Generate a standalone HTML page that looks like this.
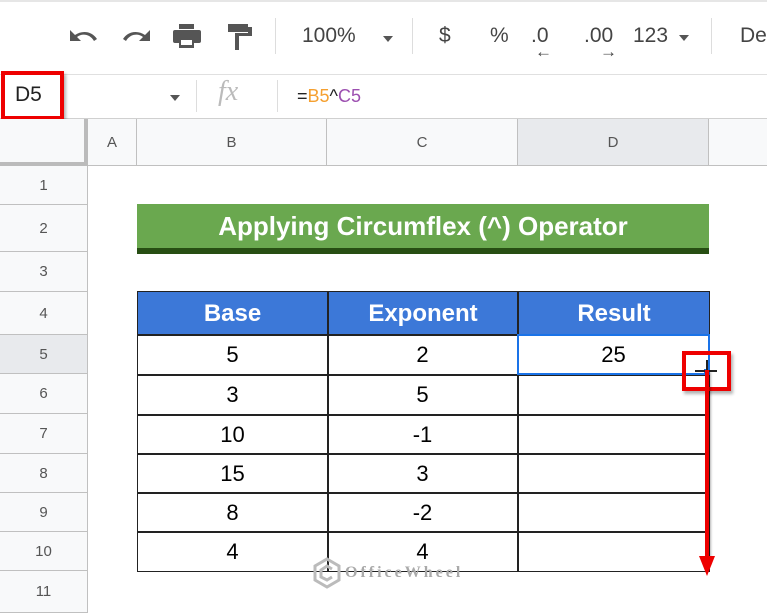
<!DOCTYPE html>
<html><head><meta charset="utf-8"><style>
*{margin:0;padding:0;box-sizing:border-box}
body{width:767px;height:613px;overflow:hidden;background:#fff;font-family:"Liberation Sans",Arial,sans-serif;position:relative}
.a{position:absolute}
.rh{position:absolute;left:0;width:87px;background:#f8f9fa;border-bottom:1px solid #c0c0c0;color:#555;font-size:15px;display:flex;align-items:center;justify-content:center}
.ch{position:absolute;top:119px;height:47px;background:#f8f9fa;border-right:1px solid #c0c0c0;border-bottom:1px solid #c0c0c0;color:#555;font-size:15px;display:flex;align-items:center;justify-content:center}
.c{position:absolute;display:flex;align-items:center;justify-content:center;font-size:22px;color:#000}
.tb{color:#444;font-size:21px;position:absolute;top:24px}
.dd{position:absolute;width:0;height:0;border-left:5px solid transparent;border-right:5px solid transparent;border-top:6px solid #555}
</style></head><body>
<div class="a" style="left:0;top:0;width:767px;height:2px;background:#e6e6e6"></div>
<svg class="a" style="left:66px;top:24px" width="36" height="28" viewBox="0 0 36 28"><path d="M4 6v11h11l-4-4c5-4 13-3 17 4l3-2c-5-8-15-9-22-4z" fill="#555"/></svg>
<svg class="a" style="left:118px;top:24px" width="36" height="28" viewBox="0 0 36 28"><path d="M32 6v11H21l4-4c-5-4-13-3-17 4l-3-2c5-8 15-9 22-4z" fill="#555"/></svg>
<svg class="a" style="left:170px;top:22px" width="34" height="30" viewBox="0 0 34 30"><rect x="9" y="2" width="15" height="5" fill="#555"/><rect x="3" y="8" width="28" height="13" rx="2" fill="#555"/><rect x="9" y="16" width="15" height="10" fill="#555"/><rect x="11" y="18" width="11" height="5" fill="#fff"/></svg>
<svg class="a" style="left:226px;top:22px" width="30" height="32" viewBox="0 0 30 32"><rect x="2" y="2" width="20" height="8" fill="#555"/><path d="M22 5h4v9H13v14h-4V11h13z" fill="#555"/></svg>
<div class="a" style="left:275px;top:18px;width:1px;height:36px;background:#ddd"></div>
<div class="tb" style="left:302px">100%</div>
<div class="dd" style="left:383px;top:36px"></div>
<div class="a" style="left:412px;top:18px;width:1px;height:36px;background:#ddd"></div>
<div class="tb" style="left:439px">$</div>
<div class="tb" style="left:490px">%</div>
<div class="tb" style="left:531px">.0</div>
<div class="a" style="left:535px;top:42px;font-size:17px;font-weight:bold;color:#444">&#8592;</div>
<div class="tb" style="left:584px">.00</div>
<div class="a" style="left:600px;top:42px;font-size:17px;font-weight:bold;color:#444">&#8594;</div>
<div class="tb" style="left:633px">123</div>
<div class="dd" style="left:679px;top:35px"></div>
<div class="a" style="left:711px;top:18px;width:1px;height:36px;background:#ddd"></div>
<div class="tb" style="left:740px">De</div>
<div class="a" style="left:0;top:74px;width:767px;height:1px;background:#e0e0e0"></div>
<div class="a" style="left:15px;top:83px;font-size:21px;color:#222">D5</div>
<div class="dd" style="left:170px;top:95px"></div>
<div class="a" style="left:196px;top:80px;width:1px;height:32px;background:#ddd"></div>
<div class="a" style="left:218px;top:76px;font-size:28px;color:#bbb;font-family:'Liberation Serif',serif;font-style:italic">fx</div>
<div class="a" style="left:277px;top:80px;width:1px;height:32px;background:#ddd"></div>
<div class="a" style="left:297px;top:86px;font-size:18px;color:#222">=<span style="color:#f5a030">B5</span>^<span style="color:#9c4fb0">C5</span></div>
<div class="a" style="left:0;top:118px;width:767px;height:1px;background:#d0d0d0"></div>
<div class="a" style="left:1px;top:71px;width:63px;height:49px;border:4px solid #e00;box-shadow:2px 3px 3px rgba(0,0,0,.3)"></div>
<div class="a" style="left:0;top:119px;width:88px;height:47px;background:#f8f9fa;border-right:4px solid #bbb;border-bottom:4px solid #bbb"></div>
<div class="ch" style="left:88px;width:49px">A</div>
<div class="ch" style="left:137px;width:190px">B</div>
<div class="ch" style="left:327px;width:191px">C</div>
<div class="ch" style="left:518px;width:191px;background:#e8eaed">D</div>
<div class="ch" style="left:709px;width:58px;border-right:none"></div>
<div class="a" style="left:86px;top:166px;width:2px;height:447px;background:#c0c0c0"></div>
<div class="rh" style="top:166px;height:39px">1</div>
<div class="rh" style="top:205px;height:47px">2</div>
<div class="rh" style="top:252px;height:40px">3</div>
<div class="rh" style="top:292px;height:43px">4</div>
<div class="rh" style="top:335px;height:39px;background:#e8eaed">5</div>
<div class="rh" style="top:374px;height:40px">6</div>
<div class="rh" style="top:414px;height:40px">7</div>
<div class="rh" style="top:454px;height:39px">8</div>
<div class="rh" style="top:493px;height:39px">9</div>
<div class="rh" style="top:532px;height:39px">10</div>
<div class="rh" style="top:571px;height:42px">11</div>
<div class="a" style="left:137px;top:204px;width:572px;height:50px;background:#6aa84f;border-bottom:6px solid #274e13;color:#fff;font-weight:bold;font-size:26px;display:flex;align-items:center;justify-content:center">Applying Circumflex (^) Operator</div>
<div class="a" style="left:137px;top:291px;width:573px;height:281px;border:1.5px solid #222"></div>
<div class="c" style="left:138px;top:292px;width:189px;height:43px;background:#3c78d8;color:#fff;font-weight:bold;font-size:24px">Base</div>
<div class="c" style="left:328px;top:292px;width:190px;height:43px;background:#3c78d8;color:#fff;font-weight:bold;font-size:24px">Exponent</div>
<div class="c" style="left:519px;top:292px;width:190px;height:43px;background:#3c78d8;color:#fff;font-weight:bold;font-size:24px">Result</div>
<div class="a" style="left:327px;top:292px;width:1.5px;height:280px;background:#222"></div>
<div class="a" style="left:517px;top:292px;width:1.5px;height:280px;background:#222"></div>
<div class="a" style="left:137px;top:334px;width:573px;height:1.5px;background:#222"></div>
<div class="a" style="left:137px;top:374px;width:573px;height:1.5px;background:#222"></div>
<div class="a" style="left:137px;top:414px;width:573px;height:1.5px;background:#222"></div>
<div class="a" style="left:137px;top:453px;width:573px;height:1.5px;background:#222"></div>
<div class="a" style="left:137px;top:492px;width:573px;height:1.5px;background:#222"></div>
<div class="a" style="left:137px;top:531px;width:573px;height:1.5px;background:#222"></div>
<div class="c" style="left:138px;top:335px;width:189px;height:39px">5</div><div class="c" style="left:328px;top:335px;width:189px;height:39px">2</div><div class="c" style="left:518px;top:335px;width:191px;height:39px">25</div>
<div class="c" style="left:138px;top:375px;width:189px;height:39px">3</div><div class="c" style="left:328px;top:375px;width:189px;height:39px">5</div>
<div class="c" style="left:138px;top:415px;width:189px;height:39px">10</div><div class="c" style="left:328px;top:415px;width:189px;height:39px">-1</div>
<div class="c" style="left:138px;top:454px;width:189px;height:39px">15</div><div class="c" style="left:328px;top:454px;width:189px;height:39px">3</div>
<div class="c" style="left:138px;top:493px;width:189px;height:39px">8</div><div class="c" style="left:328px;top:493px;width:189px;height:39px">-2</div>
<div class="c" style="left:138px;top:532px;width:189px;height:39px">4</div><div class="c" style="left:328px;top:532px;width:189px;height:39px">4</div>
<div class="a" style="left:517px;top:334px;width:193px;height:41px;border:2px solid #1a73e8"></div>
<div class="a" style="left:704px;top:369px;width:6px;height:6px;background:#1a73e8"></div>
<svg class="a" style="left:313px;top:557px" width="28" height="32" viewBox="0 0 28 32"><path d="M14 2L26 9v14l-12 7L2 23V9z" fill="none" stroke="#bbb" stroke-width="3"/><path d="M19 12l-5-3-6 4v7l6 3 5-3" fill="none" stroke="#bbb" stroke-width="3"/></svg>
<div class="a" style="left:345px;top:564px;font-size:16px;letter-spacing:3px;color:#aaa;font-family:'Liberation Serif',serif;font-weight:bold">OfficeWheel</div>
<div class="a" style="left:682px;top:351px;width:49px;height:40px;border:4px solid #e00;box-shadow:2px 3px 3px rgba(0,0,0,.3)"></div>
<div class="a" style="left:695px;top:370px;width:22px;height:1.5px;background:#222"></div>
<div class="a" style="left:706px;top:360px;width:1.5px;height:20px;background:#222"></div>
<div class="a" style="left:705px;top:370px;width:4px;height:192px;background:#e00;box-shadow:2px 2px 2px rgba(0,0,0,.3)"></div>
<div class="a" style="left:699px;top:556px;width:0;height:0;border-left:8px solid transparent;border-right:8px solid transparent;border-top:20px solid #e00"></div>
</body></html>
